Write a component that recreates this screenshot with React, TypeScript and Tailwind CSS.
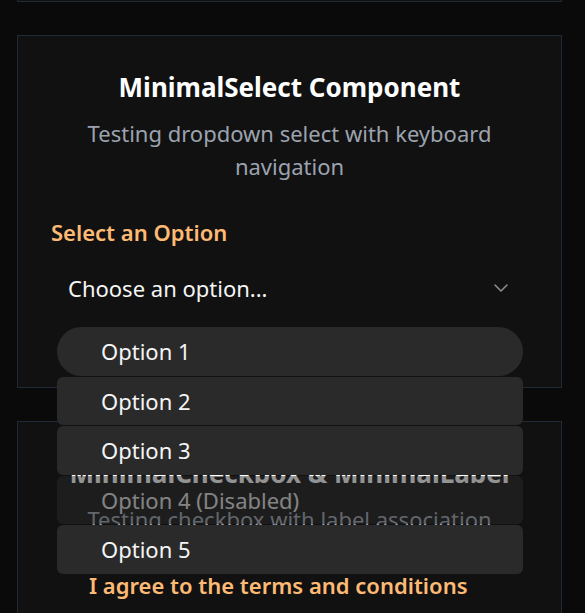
import React from 'react';

type Opt = { label: string; disabled?: boolean };

const OPTIONS: Opt[] = [
  { label: 'Option 1' },
  { label: 'Option 2' },
  { label: 'Option 3' },
  { label: 'Option 4 (Disabled)', disabled: true },
  { label: 'Option 5' },
];

const ChevronDown = () => (
  <svg width="24" height="24" viewBox="0 0 24 24" fill="none" stroke="#8b8f96" strokeWidth="1.5" strokeLinecap="round" strokeLinejoin="round">
    <path d="m6 9 6 6 6-6" />
  </svg>
);

export default function App() {
  const highlighted = 0;

  return (
    <div className="h-[613px] overflow-hidden bg-[#0a0a0a] pl-[17px] font-['Noto_Sans',sans-serif]">
      <div className="h-[2px] w-[545px] border-x border-b border-[#1f2937] bg-[#111111]" />

      <section className="mt-[33px] w-[545px] border border-[#1f2937] bg-[#111111] px-[33px] pt-[33px] pb-[75px]">
        <h2 className="text-center text-[26px] font-bold leading-[36px] text-white">MinimalSelect Component</h2>
        <p className="mt-3 text-center text-[22px] leading-[33px] text-[#9ca3af]">
          Testing dropdown select with keyboard navigation
        </p>
        <label className="mt-[35px] block text-[22px] font-semibold leading-[28px] text-[#fdba74]">Select an Option</label>

        <div className="relative mt-[18px]">
          <button className="flex h-12 w-full items-center justify-between pl-[17px] pr-[15px] text-[22px] leading-[28px] text-[#f5f5f5]">
            <span>Choose an option...</span>
            <ChevronDown />
          </button>

          <ul className="absolute top-[63px] left-[6px] right-[5px] z-10 flex flex-col gap-px">
            {OPTIONS.map((opt, i) => (
              <li
                key={opt.label}
                className={`flex h-[48.5px] items-center bg-[#2a2a2a] pl-[44px] text-[22px] leading-[28px] text-[#f5f5f5] ${
                  i === highlighted ? 'rounded-full' : 'rounded-md'
                } ${opt.disabled ? 'opacity-50' : ''}`}
              >
                {opt.label}
              </li>
            ))}
          </ul>
        </div>
      </section>

      <section className="mt-[33px] w-[545px] border border-[#1f2937] bg-[#111111] px-[33px] pt-[33px] pb-[40px]">
        <h2 className="text-center text-[26px] font-bold leading-[36px] text-white">MinimalCheckbox &amp; MinimalLabel</h2>
        <p className="mt-3 text-center text-[22px] leading-[33px] text-[#9ca3af]">Testing checkbox with label association</p>
        <div className="mt-[35px] flex items-center gap-3">
          <span className="h-[26px] w-[26px]" />
          <label className="text-[22px] font-semibold leading-[28px] text-[#fdba74]">I agree to the terms and conditions</label>
        </div>
      </section>
    </div>
  );
}
